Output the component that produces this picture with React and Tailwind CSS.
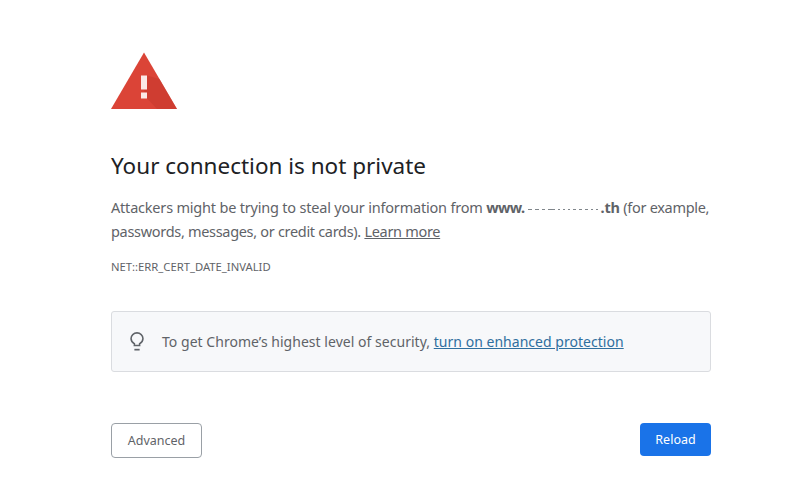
const font = "[font-family:'Noto_Sans',sans-serif]";

const dashes = [4, 4, 3, 7, 2, 2, 2, 3, 3, 3, 2, 2];

function Warning() {
  return (
    <svg width="66" height="57" viewBox="0 0 66 57" className="block">
      <path d="M33 0.5 L66 57 L0 57 Z" fill="#db4437" />
      <path d="M36 23.5 L36 37 L33 38 L36 46.5 L46 57 L66 57 L48.5 27 Z" fill="#c5392d" opacity="0.55" />
      <rect x="30" y="23.5" width="6" height="14" fill="#fbe9e7" />
      <rect x="30" y="40.5" width="6" height="6" fill="#fbe9e7" />
    </svg>
  );
}

function Bulb() {
  return (
    <svg width="14" height="19" viewBox="0 0 16 20" preserveAspectRatio="none" fill="none" stroke="#5f6368" strokeWidth="1.8" className="block">
      <path d="M5 14.2 V12.4 C2.6 11.2 1.2 9.2 1.2 6.9 C1.2 3.6 4.2 1 8 1 C11.8 1 14.8 3.6 14.8 6.9 C14.8 9.2 13.4 11.2 11 12.4 V14.2 Z" />
      <path d="M5 18.6 H11" />
    </svg>
  );
}

export default function App() {
  return (
    <div className={`${font} w-[795px] h-[497px] bg-white overflow-hidden pl-[111px] pr-[84px] pt-[52px]`}>
      <Warning />
      <h1 className="mt-[41px] text-[22.5px] leading-[32px] font-normal text-[#202124]">
        Your connection is not private
      </h1>
      <p className="mt-[13px] w-[601px] text-[14.5px] leading-[24px] text-[#5f6368] tracking-[-0.2px]">
        Attackers might be trying to steal your information from{" "}
        <b className="font-bold">
          <span className="tracking-[-0.6px]">www.</span>
          <span className="inline-flex gap-[3px] ml-[3px] mr-[3px] align-baseline -translate-y-[3px]">
            {dashes.map((w, i) => (
              <span key={i} className="inline-block h-px bg-[#80868b]" style={{ width: w }} />
            ))}
          </span>
          .th
        </b>{" "}
        <span className="tracking-[-0.31px]">
          (for example, passwords, messages, or credit cards).{" "}
          <a className="underline text-[#5f6368]">Learn more</a>
        </span>
      </p>
      <div className="mt-[16px] text-[11.25px] leading-[16px] text-[#5f6368]">NET::ERR_CERT_DATE_INVALID</div>
      <div className="mt-[36px] w-[600px] h-[61px] bg-[#f7f8fa] border border-[#dadce0] rounded-[3px] flex items-center pl-[18px]">
        <Bulb />
        <span className="ml-[18px] text-[14px] text-[#5f6368] tracking-[0.03px]">
          To get Chrome’s highest level of security,{" "}
          <a className="underline text-[#2f6f9f]">turn on enhanced protection</a>
        </span>
      </div>
      <div className="mt-[51px] w-[600px] flex justify-between items-start">
        <button className="w-[91px] h-[35px] pt-[2px] bg-white border border-[#9aa0a6] rounded-[4px] text-[12.5px] text-[#5f6368]">
          Advanced
        </button>
        <button className="w-[71px] h-[33px] pt-[2px] bg-[#1a73e8] rounded-[4px] text-[12.5px] text-white">Reload</button>
      </div>
    </div>
  );
}
